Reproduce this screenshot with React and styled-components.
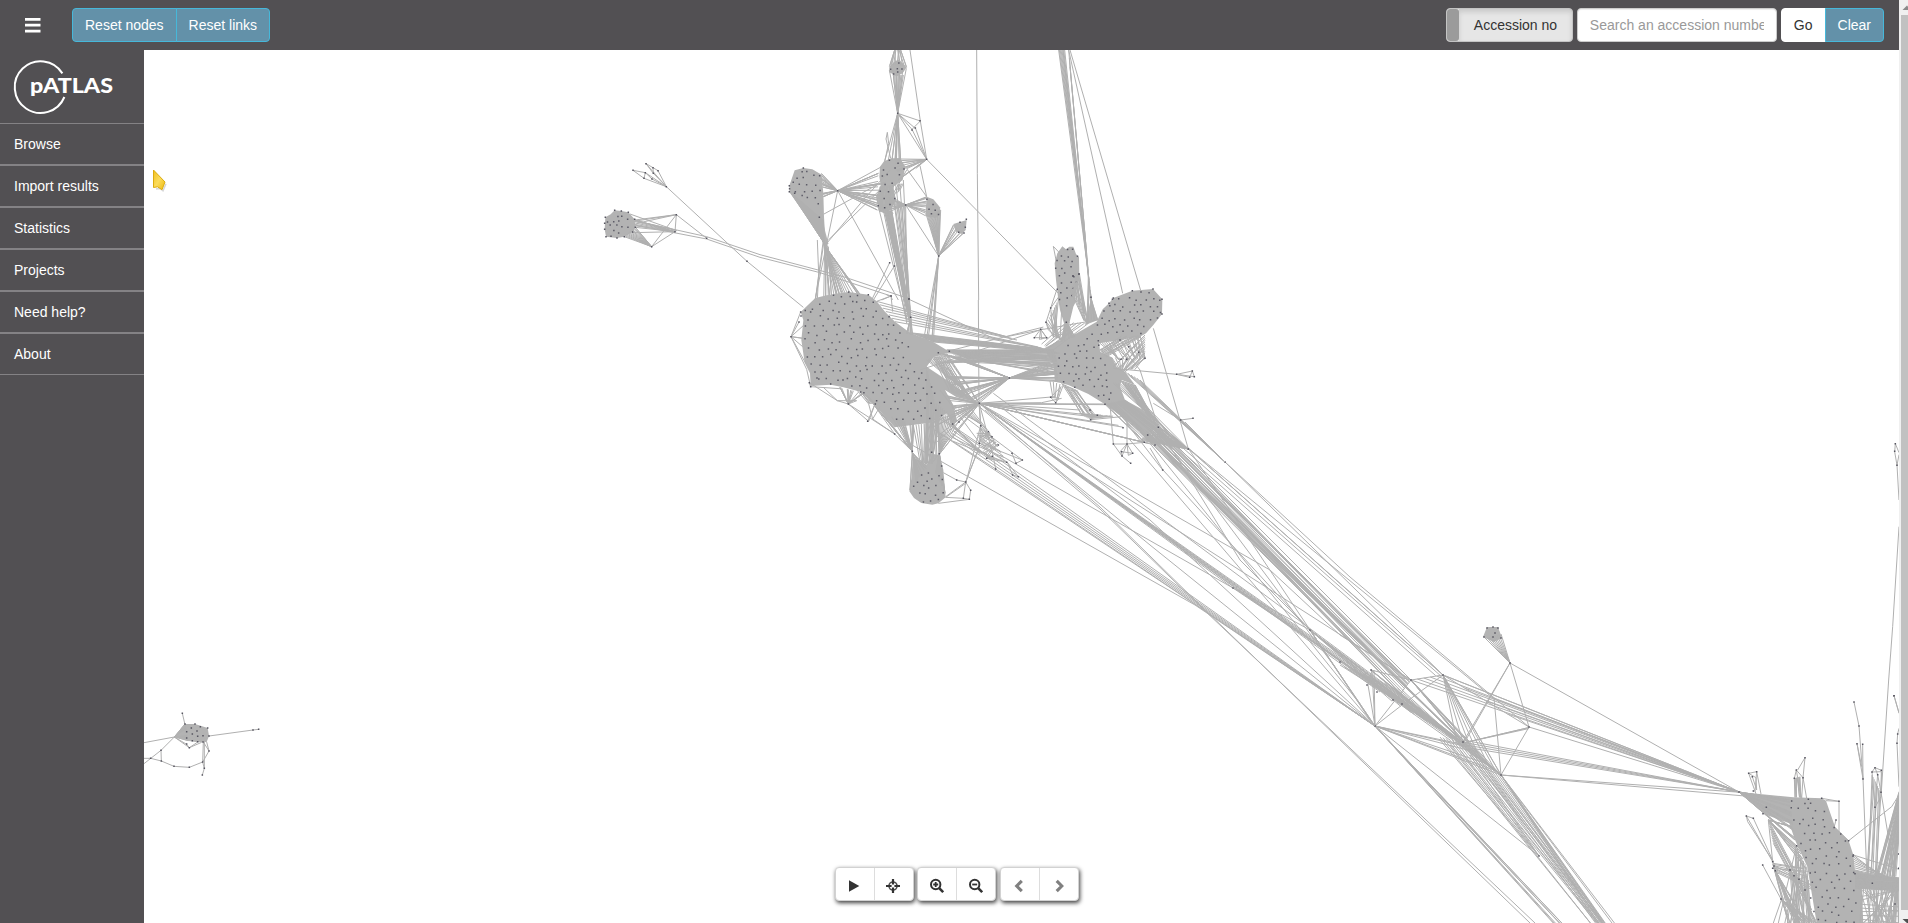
import React from "react";
import styled, { createGlobalStyle, css } from "styled-components";

const GlobalStyle = createGlobalStyle`
  * { box-sizing: border-box; }
  html, body { margin: 0; height: 100%; overflow: hidden; background: #fff; }
  body { font: 14px/20px "Liberation Sans", Arial, sans-serif; color: #333; }
`;

const Window = styled.div`
  display: grid;
  grid-template-columns: 1fr 9px;
  height: 100vh;
  overflow: hidden;
`;
const Page = styled.div`
  display: grid;
  grid-template-rows: 50px 1fr;
  min-width: 0;
  min-height: 0;
`;
const TopBar = styled.header`
  display: flex;
  align-items: center;
  justify-content: space-between;
  padding: 0 15px 0 25px;
  background: #525053;
`;
const BarSide = styled.div`
  display: flex;
  align-items: center;
  gap: ${(p) => p.$gap}px;
`;
const MenuButton = styled.button`
  width: 16px;
  height: 16px;
  padding: 0;
  border: 0;
  background: none;
  display: grid;
  svg { display: block; }
`;
const ButtonGroup = styled.div`
  display: flex;
`;
const BarButton = styled.button`
  height: 34px;
  padding: 0 12px;
  font: inherit;
  white-space: nowrap;
  border: 1px solid ${(p) => (p.$plain ? "#fff" : "#46b8da")};
  background: ${(p) => (p.$plain ? "#fff" : "#6391a9")};
  color: ${(p) => (p.$plain ? "#333" : "#fff")};
  &:first-child { border-radius: 4px 0 0 4px; }
  &:last-child { border-radius: 0 4px 4px 0; }
  & + & { margin-left: -1px; }
`;
const Toggle = styled.div`
  display: flex;
  width: 127px;
  height: 34px;
  border: 1px solid #c4c4c4;
  border-radius: 4px;
  overflow: hidden;
  background: #e6e6e6;
`;
const ToggleHandle = styled.span`
  width: 12px;
  border-radius: 3px;
  background: #9b9b9b;
`;
const ToggleLabel = styled.span`
  flex: 1;
  padding-left: 15px;
  line-height: 32px;
  white-space: nowrap;
  box-shadow: inset 0 3px 5px rgba(0, 0, 0, 0.125);
`;
const SearchInput = styled.input`
  width: 200px;
  height: 34px;
  padding: 6px 12px;
  border: 1px solid #ccc;
  border-radius: 4px;
  font: inherit;
  box-shadow: inset 0 1px 1px rgba(0, 0, 0, 0.075);
  &::placeholder { color: #999; opacity: 1; }
`;
const Body = styled.div`
  display: grid;
  grid-template-columns: 144px 1fr;
  min-height: 0;
`;
const Sidebar = styled.nav`
  background: #525053;
  color: #fff;
`;
const Brand = styled.div`
  height: 73px;
  svg { display: block; }
`;
const NavItem = styled.a`
  display: block;
  height: 42px;
  padding: 0 14px;
  line-height: 40px;
  border-top: 1px solid #848285;
  border-bottom: 1px solid #848285;
`;
const GraphPane = styled.main`
  position: relative;
  min-width: 0;
  min-height: 0;
  background: #fff;
  overflow: hidden;
`;
const GraphSvg = styled.svg`
  display: block;
  width: 1755px;
  height: 873px;
`;
const Controls = styled.div`
  position: absolute;
  left: 691px;
  bottom: 22px;
  display: flex;
  gap: 3px;
`;
const ControlGroup = styled.div`
  display: flex;
  width: 79px;
  height: 34px;
  background: #fff;
  border: 1px solid #d2d2d2;
  border-radius: 4px;
  box-shadow: 1px 2px 4px rgba(0, 0, 0, 0.75);
  &:last-child { margin-left: 1px; }
`;
const ControlButton = styled.button`
  flex: 1;
  display: flex;
  align-items: center;
  justify-content: center;
  padding: 3px 2px 0 0;
  border: 0;
  background: none;
  color: ${(p) => (p.$muted ? "#808080" : "#333")};
  ${(p) => p.$divided && css`border-left: 1px solid #ddd;`}
`;
const Pointer = styled.svg`
  position: absolute;
  left: 8px;
  top: 118px;
`;
const Scrollbar = styled.div`
  display: flex;
  flex-direction: column;
  background: #f0f0f0;
`;
const ScrollArrow = styled.svg`
  display: block;
  width: 9px;
  height: ${(p) => p.$h}px;
`;
const ScrollThumb = styled.div`
  flex: 1;
  margin-left: 2px;
  background: #c1c1c1;
`;

/* ---------- network drawing ---------- */

function randomFrom(seed) {
  let s = seed;
  return () => {
    s = (s * 16807) % 2147483647;
    return s / 2147483647;
  };
}

const toPairs = (str) => str.split(" ").map((p) => p.split(",").map(Number));

function inside([x, y], poly) {
  let hit = false;
  for (let i = 0, j = poly.length - 1; i < poly.length; j = i++) {
    const [xi, yi] = poly[i];
    const [xj, yj] = poly[j];
    if (yi > y !== yj > y && x < ((xj - xi) * (y - yi)) / (yj - yi) + xi) hit = !hit;
  }
  return hit;
}

// Nodes spread over a polygon on a loosely shaken grid.
function scatter(str, step, seed) {
  const poly = toPairs(str);
  const rnd = randomFrom(seed);
  const xs = poly.map((p) => p[0]);
  const ys = poly.map((p) => p[1]);
  const out = [];
  let row = 0;
  for (let y = Math.min(...ys) + step / 3; y < Math.max(...ys); y += step * 0.85) {
    row += 1;
    for (let x = Math.min(...xs) + (row % 2) * step * 0.5; x < Math.max(...xs); x += step) {
      const p = [x + (rnd() - 0.5) * step * 0.5, y + (rnd() - 0.5) * step * 0.5];
      if (inside(p, poly)) out.push(p);
    }
  }
  return out;
}

// Links from points along segment a to points along segment b.
function bundle([ax, ay, bx, by, cx, cy, dx, dy, n], seed) {
  const rnd = randomFrom(seed * 7919 + 13);
  let d = "";
  for (let i = 0; i < n; i++) {
    const t = n === 1 ? 0 : i / (n - 1);
    const u = Math.min(1, Math.max(0, t + (rnd() - 0.5) * 0.5));
    d += `M${ax + (bx - ax) * t} ${ay + (by - ay) * t}L${cx + (dx - cx) * u} ${cy + (dy - cy) * u}`;
  }
  return d;
}

const dotPath = (pts, r) =>
  pts.map(([x, y]) => `M${x - r} ${y - r}h${2 * r}v${2 * r}h${-2 * r}z`).join("");

function Cluster({ x = 0, y = 0, scale = 3, shapes = [], links = [], bundles = [], nodes = "", fields = [] }) {
  const r = scale * 0.75;
  return (
    <g transform={`translate(${x} ${y}) scale(${1 / scale})`}>
      {shapes.map((s) => (
        <polygon key={s} points={s} fill="#b3b3b3" />
      ))}
      <g fill="none" stroke="#b0b0b0" strokeWidth={scale}>
        {links.map((l, i) => (
          <polyline key={i} points={l} />
        ))}
        {bundles.map((b, i) => (
          <path key={i} d={bundle(b, i + 1)} />
        ))}
      </g>
      {fields.map(([poly, step], i) => (
        <path key={i} d={dotPath(scatter(poly, step, i + 17), r)} fill="#5c5b66" />
      ))}
      {nodes && <path d={dotPath(toPairs(nodes), r)} fill="#55545f" />}
    </g>
  );
}

const headBlob = "88,437 104,391 130,384 157,388 185,404 190,460 192,530 196,600 180,578 150,545 88,456";
const headField = "88,437 104,391 130,384 157,388 185,404 190,460 180,500 130,470 88,456";
const midBlob = "360,380 372,364 394,355 420,355 436,380 428,420 400,440 408,480 392,510 375,521 356,512 348,470 362,436 358,410";
const topBlob = "388,80 406,62 418,60 440,82 428,100 410,109 388,97";
const armBlob = "500,470 520,478 540,502 542,520 528,534 496,528";
const towerBlob = "884,670 892,640 907,619 918,628 928,620 940,620 948,642 957,652 958,700 952,730 945,780 895,780 888,720";

const upper = {
  x: 760, y: 40,
  shapes: [headBlob, midBlob, topBlob, armBlob, towerBlob, "580,552 620,540 617,570 606,582 588,575", "170,565 192,560 205,610 196,625 190,612"],
  fields: [[headField, 23], [midBlob, 26], [topBlob, 20], [armBlob, 19], [towerBlob, 23]],
  links: [
    "450,30 481,243 500,358 895,760", "650,30 652,400 656,780", "413,220 481,243", "413,220 456,268 481,243", "413,220 467,266 500,358", "456,268 500,358 413,220", "382,277 378,297 392,355", "382,277 386,310 374,364", "500,358 440,386 500,470", "500,358 467,386", "480,377 500,470", "926,30 1088,760", "930,30 1143,755", "909,30 992,772", "896,30 985,700", "437,495 500,470", "233,452 415,780", "233,452 165,780", "437,495 440,780", "389,668 335,780", "403,678 340,780", "365,780 393,768 397,780", "0,644 250,710 447,776", "0,652 180,698 393,768", "437,495 536,648", "880,619 890,670", "880,619 900,640", "440,390 400,460", "374,364 386,320 413,220", "172,600 176,700 172,780", "196,615 310,480 390,390", "192,522 350,435", "205,600 370,440", "388,80 404,30", "392,80 404,30", "440,82 422,30",
  ],
  bundles: [
    [390, 75, 438, 78, 404, 30, 422, 30, 10],
    [400, 105, 430, 105, 413, 220, 413, 220, 9], [388, 90, 439, 85, 413, 220, 413, 220, 6],
    [413, 220, 413, 220, 405, 360, 422, 360, 8], [413, 220, 413, 220, 385, 360, 400, 360, 3],
    [233, 452, 233, 452, 184, 400, 190, 470, 22], [233, 452, 233, 452, 355, 400, 352, 510, 20],
    [233, 452, 233, 452, 365, 380, 400, 520, 8], [500, 358, 500, 358, 405, 355, 415, 420, 11],
    [437, 495, 437, 495, 500, 472, 496, 527, 14], [437, 495, 437, 495, 375, 455, 375, 520, 14],
    [500, 528, 542, 510, 536, 648, 536, 648, 18], [536, 648, 536, 648, 580, 555, 610, 580, 10],
    [375, 520, 395, 510, 450, 860, 452, 832, 16], [355, 500, 430, 420, 440, 860, 447, 778, 8],
    [406, 500, 430, 490, 447, 778, 452, 832, 6], [90, 455, 190, 540, 193, 610, 193, 610, 30],
    [193, 610, 196, 620, 210, 780, 310, 776, 24], [190, 600, 205, 620, 166, 780, 215, 776, 8],
    [536, 648, 536, 648, 490, 905, 520, 905, 6], [898, 30, 914, 30, 975, 600, 992, 770, 7],
    [926, 30, 930, 80, 980, 640, 985, 700, 3], [945, 700, 958, 700, 950, 780, 985, 840, 8],
    [360, 440, 430, 430, 360, 515, 420, 450, 16],
  ],
  nodes: "500,358 456,270 466,264 480,242 536,648 437,495 413,220 233,452 600,547 619,538 616,562 612,579 596,577 992,772 389,668 403,678 393,768 447,776 957,702 939,708 374,503 130,384 104,460 88,437 88,455 178,532",
};

const leftBlob = "122,126 166,84 200,76 266,66 325,74 350,94 375,125 405,155 450,188 520,216 560,240 600,252 560,250 520,262 500,290 560,330 658,400 590,382 555,360 580,405 592,455 575,462 560,430 510,458 404,472 340,402 304,366 250,352 212,344 152,348 150,310 134,278 124,210 130,150";
const rightBlob = "850,236 890,215 950,190 1010,155 1028,118 1047,100 1060,84 1117,62 1179,57 1207,88 1206,132 1180,165 1158,190 1140,200 1080,210 1018,220 1020,245 1055,262 1070,290 1095,305 1125,345 1085,330 1080,350 1095,390 1150,420 1195,470 1170,490 1085,440 1035,403 985,372 925,345 905,340 885,335 880,280";
const bigField = "122,126 166,84 266,66 325,74 375,125 405,155 450,200 460,300 520,320 540,360 560,430 510,456 404,462 345,400 300,362 212,342 152,340 134,278 124,210";
const rightField = "890,235 960,215 1060,84 1179,57 1207,88 1206,132 1140,195 1030,200 1010,240 1060,290 1055,330 1060,400 1035,403 985,372 895,335";
const pillBlob = "458,560 500,584 520,552 540,556 550,600 557,682 535,700 517,704 484,699 462,684 448,664 455,620";
const pillField = "462,610 550,605 555,680 535,700 484,699 452,664";

const center = {
  x: 760, y: 270,
  shapes: [leftBlob, rightBlob, pillBlob, "895,90 950,90 940,110 928,160 912,160 900,120", "912,160 925,160 940,200 905,210", "993,84 1015,150 975,165"],
  fields: [[bigField, 27], [rightField, 24], [pillField, 23], ["893,80 945,80 935,110 905,110", 22]],
  links: [
    "350,94 393,78 398,125", "447,88 700,205 850,236", "380,75 393,78", "655,90 657,400 662,467", "1180,175 1285,537", "1060,295 1250,313 1297,303 1303,320 1250,313", "1250,313 1289,322 1297,303",
    "93,200 122,126", "93,200 117,156", "93,200 130,205 93,200 136,278", "93,200 132,165", "93,200 128,230", "93,200 140,298 152,350", "152,350 148,338 232,392 265,402", "152,350 240,356", "190,352 232,392 290,392 265,402 326,454 345,402 323,454", "338,447 360,410", "265,402 404,492 457,544", "326,402 338,447 404,492", "404,492 340,402", "550,608 590,630 617,636 610,685 628,688 632,661 617,636", "557,680 617,636 658,530 662,467", "557,682 610,685", "557,682 617,640 662,467", "535,700 628,688", "658,530 617,636", "658,400 662,467", "658,400 845,398 905,385", "658,400 1035,402", "658,402 1035,404", "658,400 885,380", "658,400 700,560 707,597", "457,544 460,460", "872,382 903,350 887,398 872,382 897,385 887,398", "823,203 842,178 860,203 823,203", "842,178 838,208 860,203 842,178 845,208", "540,360 660,520 787,570", "600,430 760,550 787,570 768,580 756,550", "680,565 742,577 775,620 758,615 742,577", "580,515 707,597 1845,1368", "700,370 2100,1410",
    "1060,522 1101,522 1153,517", "1101,522 1101,440", "1153,517 1085,440", "1085,545 1118,550 1101,522 1082,543 1086,558 1112,580", "1101,522 1105,556 1118,550", "1086,558 1101,522", "1050,402 1060,522 1086,558", "1180,400 1262,450 1299,445", "1208,600 1100,460", "1195,472 1140,300 1100,250", "1285,537 1110,360", "858,157 872,114 895,82 905,120 900,210", "858,157 880,200 872,114 890,60", "858,157 865,180 905,210", "447,88 452,142", "740,200 850,178 1010,150",
  ],
  bundles: [
    [452, 142, 452, 142, 440, 190, 458, 195, 10],
    [350, 94, 405, 155, 740, 200, 850, 236, 7],
    [450, 188, 520, 216, 845, 236, 900, 250, 14], [560, 240, 620, 265, 880, 240, 895, 290, 26],
    [600, 265, 560, 240, 850, 236, 890, 250, 9],
    [540, 250, 600, 262, 748, 324, 748, 324, 10], [748, 324, 748, 324, 560, 320, 600, 380, 16],
    [748, 324, 748, 324, 885, 270, 895, 335, 24], [748, 324, 748, 324, 658, 400, 620, 385, 8],
    [540, 280, 620, 262, 860, 260, 895, 320, 12],
    [520, 262, 560, 250, 560, 360, 658, 400, 16], [500, 270, 540, 260, 600, 350, 640, 390, 10],
    [558, 245, 480, 300, 850, 170, 850, 178, 2], [658, 400, 658, 400, 555, 360, 595, 455, 18],
    [658, 400, 658, 400, 510, 450, 540, 550, 8], [530, 400, 595, 455, 538, 551, 538, 551, 12],
    [457, 544, 457, 544, 395, 440, 460, 465, 18], [457, 544, 457, 544, 340, 402, 400, 470, 12],
    [457, 548, 457, 548, 450, 660, 500, 590, 14], [495, 460, 540, 440, 490, 580, 515, 580, 16],
    [500, 290, 535, 450, 500, 580, 540, 550, 14], [538, 551, 538, 551, 515, 580, 555, 670, 15],
    [460, 465, 500, 460, 480, 575, 500, 584, 6],
    [265, 402, 265, 402, 240, 352, 310, 370, 14], [326, 402, 345, 402, 290, 360, 330, 380, 8],
    [919, 157, 919, 157, 900, 215, 945, 200, 14],
    [985, 10, 993, 84, 980, 150, 1015, 150, 7], [919, 157, 985, 160, 840, 220, 880, 240, 7],
    [930, 60, 955, 20, 970, 150, 985, 160, 8],
    [895, 90, 860, 157, 880, 200, 905, 210, 10], [1020, 220, 1140, 195, 1060, 270, 1155, 265, 20],
    [1018, 240, 1040, 260, 1080, 200, 1150, 200, 14], [1155, 195, 1155, 265, 1060, 290, 1130, 300, 14],
    [1055, 262, 1155, 265, 1080, 300, 1095, 305, 10], [1080, 330, 1125, 345, 1150, 420, 1195, 472, 16],
    [1035, 403, 1095, 390, 1153, 517, 1285, 537, 24], [1060, 340, 1125, 345, 1285, 537, 1195, 472, 10],
    [1195, 472, 1140, 510, 1285, 537, 1285, 537, 18], [1095, 305, 1140, 330, 1395, 576, 1395, 576, 6],
    [658, 400, 658, 400, 960, 420, 1090, 472, 5], [658, 400, 658, 400, 1153, 517, 1185, 525, 4],
    [905, 340, 950, 360, 960, 428, 1010, 435, 14], [958, 430, 992, 449, 1010, 435, 1085, 440, 8],
    [662, 467, 658, 530, 696, 500, 740, 577, 12], [650, 490, 680, 565, 685, 485, 715, 525, 14],
    [580, 470, 570, 510, 680, 565, 742, 577, 5], [530, 440, 560, 440, 660, 520, 660, 560, 5],
    [870, 333, 910, 345, 872, 382, 900, 385, 5], [590, 420, 620, 400, 660, 460, 690, 490, 6],
  ],
  nodes: "122,126 152,126 117,156 93,200 148,338 152,350 171,324 212,342 249,330 265,402 302,366 323,454 346,402 404,492 457,544 515,547 538,551 545,588 590,630 617,636 632,661 610,685 628,688 266,66 325,74 290,96 393,78 452,142 447,88 535,248 568,244 748,324 658,400 578,462 597,456 662,467 685,485 696,500 658,520 715,525 697,559 680,565 740,577 756,550 768,580 787,570 758,615 775,620 707,597 842,178 823,203 860,203 872,382 887,398 858,157 872,114 919,157 957,12 939,18 993,82 1047,100 1060,84 1117,62 1143,66 1179,57 1206,88 1206,132 1155,265 1136,247 1083,268 1106,230 1100,268 1080,210 1250,313 1297,303 1303,320 1289,322 1035,403 990,420 992,449 1012,436 1089,473 1060,522 1101,522 1085,545 1118,550 1086,558 1112,580 1208,600 1153,517 1185,525 1195,472 1163,495 1262,450 1299,445 1285,537",
};

const westBlob = "46,232 62,223 74,211 94,213 115,217 134,238 136,262 128,276 103,290 81,294 48,290 44,268";
const westField = "52,236 74,220 112,225 128,240 128,262 100,282 52,282";
const west = {
  x: 590, y: 140,
  shapes: [westBlob],
  fields: [[westField, 19]],
  links: ["129,91 166,98 186,117 229,140 162,115 129,91", "162,115 166,98 229,140", "168,71 189,83 204,92 229,140 190,100 189,83", "168,71 229,140 471,364 640,502", "168,71 190,100", "259,224 255,275 185,320 259,224 350,295", "185,320 136,262", "134,240 259,224 140,250", "259,224 132,244", "134,240 255,275 130,278", "134,242 350,290 510,344", "134,255 350,297 510,352", "150,245 260,272 120,222"],
  bundles: [[103, 290, 136, 262, 185, 320, 185, 320, 13], [134, 240, 136, 262, 255, 275, 255, 275, 6]],
  nodes: "129,91 162,115 166,98 186,117 229,140 168,71 189,83 204,92 190,100 259,224 255,275 185,320 350,295 471,364 46,232 74,211 94,213 115,217 134,238 44,250 44,268 48,290 63,289 81,294 103,290 136,262 128,276",
};

const islandBlob = "103,141 135,102 165,102 203,114 207,138 200,156 172,157 141,152";
const island = {
  x: 140, y: 690,
  shapes: [islandBlob],
  links: ["12,158 103,141 63,181 12,221", "12,205 32,205 64,213 102,229 148,232 188,216 207,183 190,156 188,216 193,235 187,255", "63,181 64,213", "127,70 140,125", "103,141 148,173 172,157", "103,141 140,163 148,173 185,157", "103,141 135,102", "207,138 339,120 356,118", "200,156 207,183", "193,156 193,235"],
  bundles: [[103, 141, 103, 141, 135, 102, 145, 152, 8]],
  nodes: "127,70 135,102 165,102 203,114 207,138 189,156 207,183 188,216 193,235 187,255 148,232 102,229 64,213 63,181 32,205 148,173 339,120 356,118 140,144 154,114 140,125 171,123 157,132 173,139 189,137 157,152 173,155 181,110 140,162",
};

// Long-range links across the canvas.
const longRange = {
  scale: 1,
  links: [
    "1181,420 1225,462 1443,675", "1185,422 1225,462 1350,577 1529,727", "1188,448 1493,698 1739,792", "1188,448 1400,637 1443,675", "1150,448 1163,470 1310,630 1375,726", "1158,427 1240,560 1310,630", "1000,455 1233,588 1310,630", "979,403 1280,596 1411,680", "979,403 1270,570 1340,635 1411,680", "905,441 1195,605 1375,726", "935,430 1196,605 1375,726", "979,403 1100,507 1200,605 1530,923", "975,403 1100,509 1204,610 1535,923", "985,410 1150,545 1375,726", "1002,408 1150,520 1375,726",
    "1510,663 1463,742", "1510,663 1467,738", "1510,663 1529,727 1501,775 1494,698", "1510,663 1739,792", "1375,726 1539,856", "1375,726 1372,670 1368,685 1375,726 1374,670", "1371,670 1411,680 1443,675", "1443,675 1529,727", "1375,726 1411,680", "1375,726 1402,705 1443,675", "1443,675 1501,775", "1411,680 1463,742", "1443,675 1463,742", "1443,675 1457,742",
  ],
  bundles: [
    [1125, 412, 1158, 427, 1400, 693, 1411, 680, 16], [1140, 432, 1188, 448, 1390, 680, 1443, 675, 7], [1120, 405, 1150, 442, 1463, 742, 1455, 735, 8],
    [1130, 440, 1188, 448, 1375, 726, 1310, 630, 4], [979, 403, 979, 403, 1463, 743, 1380, 692, 5],
    [979, 403, 979, 403, 1233, 588, 1240, 590, 3], [1233, 588, 1240, 590, 1463, 743, 1450, 740, 5],
    [950, 435, 1000, 460, 1375, 726, 1375, 726, 4], [1310, 630, 1310, 630, 1390, 700, 1463, 743, 9], [1340, 665, 1402, 690, 1450, 735, 1463, 746, 15],
    [1310, 630, 1310, 630, 1375, 726, 1370, 720, 3], [1371, 670, 1371, 670, 1450, 738, 1463, 743, 5], [1411, 680, 1411, 680, 1463, 742, 1501, 775, 7],
    [1443, 675, 1443, 675, 1463, 740, 1501, 775, 5], [1375, 726, 1375, 726, 1463, 740, 1501, 775, 6], [1463, 743, 1463, 743, 1529, 727, 1529, 729, 3],
    [1455, 742, 1463, 740, 1501, 775, 1501, 775, 9], [1375, 726, 1375, 726, 1555, 925, 1564, 925, 7],
    [1440, 737, 1467, 743, 1592, 925, 1606, 925, 10], [1463, 743, 1501, 775, 1597, 925, 1607, 925, 8], [1501, 775, 1501, 775, 1600, 925, 1616, 925, 6], [1440, 740, 1470, 755, 1539, 856, 1539, 856, 4],
    [1411, 680, 1443, 675, 1739, 792, 1739, 792, 6], [1443, 675, 1529, 727, 1739, 792, 1739, 792, 5], [1463, 740, 1470, 748, 1739, 792, 1739, 792, 4], [1501, 775, 1501, 775, 1739, 792, 1745, 796, 2],
    [1485, 638, 1501, 634, 1510, 663, 1510, 663, 9],
  ],
  shapes: ["1483,637 1487,627 1498,627 1502,638 1494,642"],
  nodes: "1487,628 1493,627 1498,628 1484,637 1501,638 1495,633 1493,637 1529,727 1501,775 1463,742 1510,663 1443,675 1411,680 1375,726 1371,670 1367,685 1377,692 1393,700 1402,704 1539,856 1310,630 1340,662 1233,588 1225,462",
};

const southBlob = "117,336 280,352 365,355 378,362 405,440 446,482 460,525 465,570 520,585 597,592 597,630 485,625 490,729 350,729 322,560 285,480 268,430 200,405 135,350";
const southField = "268,360 365,357 405,440 446,482 460,525 467,600 470,729 335,729 322,560 285,480";
const southEast = {
  x: 1700, y: 680,
  shapes: [southBlob],
  fields: [[southField, 28]],
  links: [
    "365,355 417,364 417,455 446,482", "378,362 417,364", "408,420 400,450", "446,482 575,380 597,345", "460,525 597,568", "462,66 477,138 489,297 500,570", "471,191 489,297 488,193", "471,191 485,260", "566,0 543,350 525,382", "582,47 597,98", "593,162 591,190 597,320", "597,145 593,162", "516,276 525,263 544,271 543,337", "516,276 525,382 533,284 525,263", "516,276 545,275 543,337 533,284", "543,337 570,500 585,600", "146,280 170,275 183,342", "146,280 168,342", "157,290 170,330 168,293 146,280", "170,275 165,335", "289,270 283,295 289,350", "289,270 309,293 315,233 293,270", "309,293 320,355", "309,293 305,355", "289,270 303,355", "139,408 160,415 220,545", "139,408 143,425 220,545", "139,408 222,552", "188,555 243,657 300,729", "243,657 270,729", "205,420 218,545", "245,657 220,729", "220,555 297,598 320,590", "218,565 270,570 340,575",
  ],
  bundles: [
    [117, 336, 117, 336, 268, 360, 285, 480, 28], [205, 420, 205, 420, 275, 440, 320, 570, 14], [205, 420, 220, 490, 300, 600, 350, 729, 9],
    [283, 295, 300, 290, 285, 352, 305, 352, 9], [218, 550, 230, 580, 265, 729, 320, 729, 14], [243, 657, 260, 670, 300, 729, 350, 729, 10],
    [220, 550, 225, 575, 310, 565, 350, 640, 8], [290, 495, 325, 600, 235, 729, 330, 729, 12], [270, 570, 300, 600, 280, 729, 350, 729, 12], [285, 500, 320, 560, 290, 729, 345, 729, 8],
    [460, 525, 465, 570, 540, 590, 597, 600, 8], [465, 580, 465, 625, 597, 595, 597, 632, 25],
    [516, 285, 543, 337, 500, 590, 530, 590, 9], [597, 335, 597, 400, 520, 590, 560, 590, 16], [597, 360, 597, 470, 560, 590, 590, 590, 16],
    [480, 625, 597, 625, 480, 729, 597, 729, 22], [485, 630, 597, 630, 590, 729, 490, 729, 14], [585, 600, 597, 600, 560, 729, 597, 729, 12], [480, 650, 480, 729, 597, 630, 597, 729, 8],
  ],
  nodes: "117,336 146,280 170,275 157,290 160,333 139,408 160,415 189,401 199,382 315,233 289,270 309,293 283,295 462,66 477,138 471,191 488,193 489,297 525,263 516,276 544,271 533,284 543,337 525,382 582,47 593,162 591,190 446,482 417,364 365,355 325,358 290,497 218,545 222,558 218,565 226,572 188,555 243,657 270,570 297,598 282,587 315,630 465,581 460,525 517,610 585,672 408,420 596,522 596,565",
};

const eastEdge = {
  x: 1860, y: 420,
  links: ["106,71 104,95 111,136 117,240", "106,71 117,98", "111,136 117,104", "117,320 98,620 86,780", "102,827 117,880"],
  nodes: "106,71 104,94 111,136 102,827",
};

function Network() {
  return (
    <GraphSvg viewBox="144 50 1755 873">
      <Cluster {...longRange} />
      <Cluster {...upper} />
      <Cluster {...center} />
      <Cluster {...west} />
      <Cluster {...island} />
      <Cluster {...southEast} />
      <Cluster {...eastEdge} />
    </GraphSvg>
  );
}

/* ---------- icons ---------- */

const Icon = ({ children }) => (
  <svg width="16" height="16" viewBox="0 0 16 16" fill="none" stroke="currentColor" strokeWidth="2">
    {children}
  </svg>
);
const PlayIcon = () => (
  <Icon><path d="M3 2.2 13.3 8 3 13.8z" fill="currentColor" stroke="none" /></Icon>
);
const TargetIcon = () => (
  <Icon>
    <circle cx="8" cy="8" r="4" strokeWidth="1.6" strokeOpacity=".85" />
    <path d="M8 1v5.6M8 9.4V15M1 8h5.6M9.4 8H15" strokeWidth="2.2" />
  </Icon>
);
const ZoomIcon = ({ plus }) => (
  <Icon>
    <circle cx="7.7" cy="6.5" r="4.7" />
    <path d="m11.2 10.2 4 4" strokeWidth="2.6" />
    <path d={plus ? "M5.2 6.5h5M7.7 4v5" : "M5.2 6.5h5"} strokeWidth="1.8" />
  </Icon>
);
const ChevronIcon = ({ right }) => (
  <Icon><path d={right ? "m6.7 2.8 5.1 5.2-5.1 5.2" : "M10.8 2.8 5.7 8l5.1 5.2"} strokeWidth="3.1" /></Icon>
);

const navItems = ["Browse", "Import results", "Statistics", "Projects", "Need help?", "About"];

export default function App() {
  return (
    <Window>
      <GlobalStyle />
      <Page>
        <TopBar>
          <BarSide $gap={31}>
            <MenuButton aria-label="Menu">
              <svg width="16" height="16" fill="#fff">
                <path d="M0 1h15.5v2.7H0zM0 6.8h15.5v2.7H0zM0 12.8h15.5v2.7H0z" />
              </svg>
            </MenuButton>
            <ButtonGroup>
              <BarButton>Reset nodes</BarButton>
              <BarButton>Reset links</BarButton>
            </ButtonGroup>
          </BarSide>
          <BarSide $gap={4}>
            <Toggle>
              <ToggleHandle />
              <ToggleLabel>Accession no</ToggleLabel>
            </Toggle>
            <SearchInput placeholder="Search an accession number" />
            <ButtonGroup>
              <BarButton $plain>Go</BarButton>
              <BarButton>Clear</BarButton>
            </ButtonGroup>
          </BarSide>
        </TopBar>
        <Body>
          <Sidebar>
            <Brand>
              <svg width="144" height="73">
                <path d="M62.4 23.4A25.8 25.8 0 1 0 64.4 47" fill="none" stroke="#fff" strokeWidth="2" />
                <text x="30" y="42.5" fill="#fff" fontFamily="Lato, sans-serif" fontWeight="900" fontSize="20" textLength="83" lengthAdjust="spacingAndGlyphs">pATLAS</text>
              </svg>
            </Brand>
            {navItems.map((label) => (
              <NavItem key={label}>{label}</NavItem>
            ))}
          </Sidebar>
          <GraphPane>
            <Network />
            <Controls>
              <ControlGroup>
                <ControlButton><PlayIcon /></ControlButton>
                <ControlButton $divided><TargetIcon /></ControlButton>
              </ControlGroup>
              <ControlGroup>
                <ControlButton><ZoomIcon plus /></ControlButton>
                <ControlButton $divided><ZoomIcon /></ControlButton>
              </ControlGroup>
              <ControlGroup>
                <ControlButton $muted><ChevronIcon /></ControlButton>
                <ControlButton $muted $divided><ChevronIcon right /></ControlButton>
              </ControlGroup>
            </Controls>
            <Pointer width="18" height="26">
              <defs>
                <linearGradient id="gold" x1="0" y1="0" x2="1" y2="1">
                  <stop offset="0" stopColor="#f2bf1c" />
                  <stop offset=".5" stopColor="#fbdc5c" />
                  <stop offset="1" stopColor="#edb90c" />
                </linearGradient>
              </defs>
              <path d="m4 21 4-.5 3 2.3 3-7" fill="none" stroke="#999" strokeWidth="1.5" opacity=".4" />
              <path d="M1.5 2v17.5l4-.7 4.5 2.9L13 14z" fill="url(#gold)" stroke="#dcac10" />
            </Pointer>
          </GraphPane>
        </Body>
      </Page>
      <Scrollbar>
        <ScrollArrow $h={15}><path d="M3.5 10 8 5.5l4.5 4.5z" fill="#8a8a8a" /></ScrollArrow>
        <ScrollThumb />
        <ScrollArrow $h={13}><path d="M3.5 9H13L8.5 13.5z" fill="#505050" /></ScrollArrow>
      </Scrollbar>
    </Window>
  );
}
